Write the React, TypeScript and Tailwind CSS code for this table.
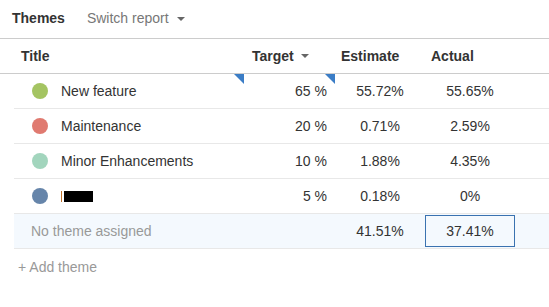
import React from "react";

const rows = [
  { name: "New feature", color: "#a4c462", target: "65 %", est: "55.72%", act: "55.65%", flags: true },
  { name: "Maintenance", color: "#e07a70", target: "20 %", est: "0.71%", act: "2.59%" },
  { name: "Minor Enhancements", color: "#a2d5bd", target: "10 %", est: "1.88%", act: "4.35%" },
  { name: "", color: "#6685aa", target: "5 %", est: "0.18%", act: "0%", redacted: true },
];

function Caret() {
  return <span className="inline-block w-0 h-0 border-x-[4px] border-t-[4px] border-x-transparent border-t-[#666]" />;
}

function Flag() {
  return (
    <span className="absolute top-0 right-0 w-0 h-0 border-l-[10px] border-b-0 border-l-transparent border-t-[10px] border-t-[#3b7dc6] border-r-0" />
  );
}

export default function App() {
  return (
    <div className="w-[549px] h-[307px] bg-white text-[14px] text-[#333]" style={{ fontFamily: '"Liberation Sans", Arial, sans-serif' }}>
      <div className="h-[39px] flex items-center pl-3 pb-[1px] border-b border-[#ccc]">
        <span className="font-bold">Themes</span>
        <span className="ml-[22px] text-[#777] flex items-center gap-[8px]">
          Switch report <Caret />
        </span>
      </div>
      <div className="h-[35px] grid grid-cols-[244px_91px_90px_90px_1fr] items-center border-b border-[#ccc] font-bold">
        <div className="pl-[21px]">Title</div>
        <div className="pl-[8px] flex items-center gap-[7px]">Target <Caret /></div>
        <div className="pl-[6px]">Estimate</div>
        <div className="pl-[6px]">Actual</div>
        <div />
      </div>
      {rows.map((r, i) => (
        <div key={i} className="ml-[14px] h-[35px] grid grid-cols-[230px_91px_90px_90px_1fr] border-b border-[#e8e8e8]">
          <div className="relative flex items-center pl-[18px]">
            <span className="w-[16px] h-[16px] rounded-full" style={{ backgroundColor: r.color }} />
            {r.redacted ? (
              <span className="ml-[13px] flex items-center">
                <span className="w-[1px] h-[11px] bg-[#c0702a]" />
                <span className="ml-[2px] w-[29px] h-[11px] bg-black" />
              </span>
            ) : (
              <span className="ml-[13px]">{r.name}</span>
            )}
            {r.flags && <Flag />}
          </div>
          <div className="relative flex items-center justify-end pr-[8px]">
            {r.target}
            {r.flags && <Flag />}
          </div>
          <div className="flex items-center justify-center">{r.est}</div>
          <div className="flex items-center justify-center">{r.act}</div>
          <div />
        </div>
      ))}
      <div className="ml-[14px] h-[35px] grid grid-cols-[230px_91px_90px_90px_1fr] border-b border-[#e8e8e8] bg-[#f4f9fe]">
        <div className="flex items-center pl-[17px] text-[#999]">No theme assigned</div>
        <div />
        <div className="flex items-center justify-center">41.51%</div>
        <div className="flex items-center justify-center border border-[#3a72b0] my-[1px]">37.41%</div>
        <div />
      </div>
      <div className="pl-[18px] pt-[8px] text-[#999]">+ Add theme</div>
    </div>
  );
}
